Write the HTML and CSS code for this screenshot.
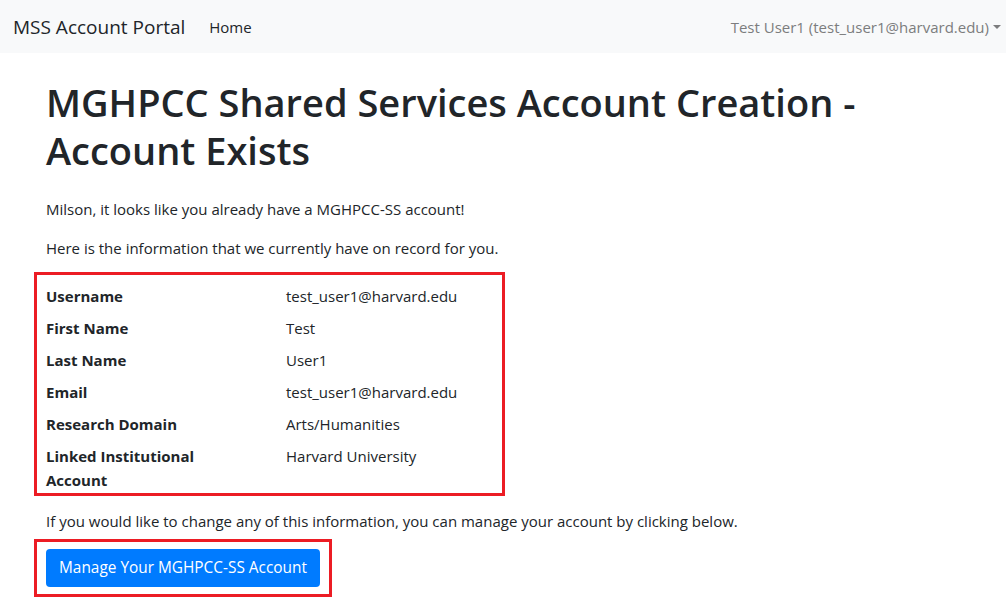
FILE: index.html
```html
<!DOCTYPE html>
<html lang="en">
<head>
<meta charset="utf-8">
<title>MSS Account Portal</title>
<link rel="stylesheet" href="styles.css">
</head>
<body>
<nav class="navbar">
  <a class="brand" href="#">MSS Account Portal</a>
  <a class="nav-link" href="#">Home</a>
  <a class="user" href="#">Test User1 (test_user1@harvard.edu)<span class="caret"></span></a>
</nav>
<main class="content">
  <h1 class="title">MGHPCC Shared Services Account Creation - Account Exists</h1>
  <p class="para first">Milson, it looks like you already have a MGHPCC-SS account!</p>
  <p class="para lead-in">Here is the information that we currently have on record for you.</p>
  <div class="info-box">
    <div class="info">
      <div class="label">Username</div><div class="value">test_user1@harvard.edu</div>
      <div class="label">First Name</div><div class="value">Test</div>
      <div class="label">Last Name</div><div class="value">User1</div>
      <div class="label">Email</div><div class="value">test_user1@harvard.edu</div>
      <div class="label">Research Domain</div><div class="value">Arts/Humanities</div>
      <div class="label">Linked Institutional Account</div><div class="value">Harvard University</div>
    </div>
  </div>
  <p class="para change">If you would like to change any of this information, you can manage your account by clicking below.</p>
  <div class="btn-box">
    <a class="btn" href="#">Manage Your MGHPCC-SS Account</a>
  </div>
</main>
</body>
</html>
```
FILE: styles.css
```css
* { box-sizing: border-box; }
html, body { margin: 0; padding: 0; }
body {
  font-family: "Open Sans", "Noto Sans", sans-serif;
  font-size: 15px;
  line-height: 24px;
  color: #212529;
  background: #fff;
}
a { text-decoration: none; }

.navbar {
  height: 53px;
  background: #f8f9fa;
  display: flex;
  align-items: center;
  padding: 0 5px 0 13px;
}
.brand {
  font-size: 19px;
  color: #212529;
  margin-right: 24px;
}
.nav-link {
  color: #212529;
  font-size: 15px;
}
.user {
  margin-left: auto;
  color: #7c7d7e;
  font-size: 15px;
  display: flex;
  align-items: center;
}
.caret {
  display: inline-block;
  margin-left: 4px;
  border-top: 4px solid #7c7d7e;
  border-left: 4px solid transparent;
  border-right: 4px solid transparent;
}

.content {
  padding: 0 34px;
}
.title {
  font-size: 38px;
  font-weight: 600;
  line-height: 48px;
  margin: 25px 0 0 12px;
  max-width: 860px;
}
.para {
  margin: 0 0 16px 12px;
}
.para.first { margin-top: 23px; margin-bottom: 15px; }
.para.lead-in { margin-bottom: 12px; }

.info-box {
  width: 471px;
  border: 3px solid #ec1c24;
  padding: 9px 9px 1px 9px;
}
.info {
  display: grid;
  grid-template-columns: 240px 1fr;
  row-gap: 8px;
}
.label {
  font-weight: 700;
  padding-right: 60px;
}
.para.change { margin-top: 13px; margin-bottom: 6px; }

.btn-box {
  width: 298px;
  border: 3px solid #ec1c24;
  padding: 7px 9px 7px 9px;
}
.btn {
  display: inline-block;
  background: #007bff;
  color: #fff;
  font-size: 15.4px;
  line-height: 24px;
  padding: 7px 13px;
  border-radius: 4px;
}
```
